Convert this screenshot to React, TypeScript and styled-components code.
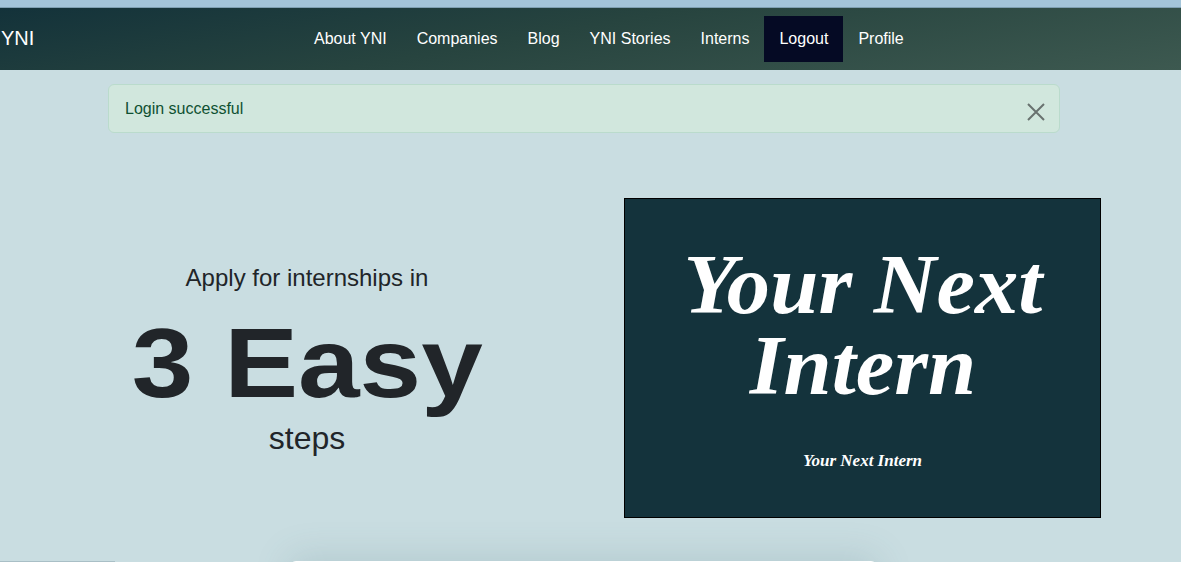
import React from "react";
import styled, { createGlobalStyle } from "styled-components";

const GlobalStyle = createGlobalStyle`
  html, body {
    margin: 0;
    padding: 0;
    background: #c9dde1;
    font-family: "Liberation Sans", Arial, sans-serif;
    color: #212529;
    overflow: hidden;
  }
  * { box-sizing: border-box; }
`;

const TopStrip = styled.div`
  height: 8px;
  background: #a3c4d9;
  border-bottom: 1px solid #7e9fb2;
`;

const NavBar = styled.nav`
  height: 62px;
  display: flex;
  align-items: center;
  background: linear-gradient(170deg, #13323a 0%, #27443f 45%, #3d5950 100%);
`;

const Brand = styled.a`
  font-size: 20px;
  color: #ffffff;
  padding-left: 1px;
  width: 299px;
  line-height: 30px;
  margin-top: -2px;
`;

const NavList = styled.ul`
  display: flex;
  list-style: none;
  margin: 0;
  padding: 0;
`;

const NavLink = styled.li<{ $active?: boolean }>`
  font-size: 16px;
  line-height: 25px;
  padding: 10px 15px 11px;
  color: #ffffff;
  background: ${(p) => (p.$active ? "#050a24" : "transparent")};
`;

const Main = styled.main`
  display: flex;
  flex-direction: column;
`;

const Alert = styled.div`
  margin: 14px 0 0 108px;
  width: 952px;
  height: 49px;
  display: flex;
  align-items: center;
  justify-content: space-between;
  padding: 0 16px;
  background: #d1e7dd;
  border: 1px solid #badbcc;
  border-radius: 6px;
  color: #0f5132;
  font-size: 16px;
`;

const AlertText = styled.span`
  line-height: 24px;
`;

const CloseButton = styled.button`
  border: none;
  background: transparent;
  padding: 0;
  margin-right: -2px;
  width: 18px;
  height: 18px;
  display: flex;
  align-items: center;
  justify-content: center;
  margin-top: 6px;
`;

const Hero = styled.section`
  display: grid;
  grid-template-columns: 614px 477px;
  column-gap: 10px;
  margin-top: 65px;
`;

const Pitch = styled.div`
  display: flex;
  flex-direction: column;
  align-items: center;
  padding-top: 65px;
`;

const PitchLead = styled.div`
  font-size: 24px;
  line-height: 29px;
`;

const PitchBig = styled.div`
  font-weight: 700;
  font-size: 98px;
  line-height: 96px;
  margin-top: 23px;
  color: #212529;
  transform: scaleX(1.13);
`;

const PitchTail = styled.div`
  font-size: 32px;
  line-height: 38px;
  margin-top: 8px;
`;

const Card = styled.div`
  height: 320px;
  background: #14333c;
  border: 1px solid #000000;
  display: flex;
  flex-direction: column;
  align-items: center;
  padding-top: 45px;
  color: #ffffff;
  font-family: "Liberation Serif", "Times New Roman", serif;
  font-style: italic;
  font-weight: 700;
`;

const CardTitle = styled.div`
  font-size: 85px;
  line-height: 81px;
  text-align: center;
  transform: scaleX(1.02);
`;

const CardSub = styled.div`
  font-size: 17px;
  line-height: 24px;
  margin-top: 43px;
`;

const NextRow = styled.div`
  position: relative;
  height: 60px;
  margin-top: 43px;
`;

const NextCard = styled.div`
  position: absolute;
  left: 290px;
  top: 0;
  width: 587px;
  height: 200px;
  background: #ffffff;
  border-radius: 6px;
  box-shadow: 0 -4px 36px rgba(70, 110, 120, 0.18);
`;

const SideTab = styled.div`
  position: absolute;
  left: 0;
  top: 0;
  width: 115px;
  height: 4px;
  background: #4f7f96;
  border-top: 1px solid #a9bfc6;
`;

export default function App() {
  const links = ["About YNI", "Companies", "Blog", "YNI Stories", "Interns", "Logout", "Profile"];
  return (
    <>
      <GlobalStyle />
      <TopStrip />
      <NavBar>
        <Brand>YNI</Brand>
        <NavList>
          {links.map((l) => (
            <NavLink key={l} $active={l === "Logout"}>
              {l}
            </NavLink>
          ))}
        </NavList>
      </NavBar>
      <Main>
        <Alert>
          <AlertText>Login successful</AlertText>
          <CloseButton aria-label="Close">
            <svg width="18" height="18" viewBox="0 0 18 18">
              <path d="M1 1 L17 17 M17 1 L1 17" stroke="#68726f" strokeWidth="2" />
            </svg>
          </CloseButton>
        </Alert>
        <Hero>
          <Pitch>
            <PitchLead>Apply for internships in</PitchLead>
            <PitchBig>3 Easy</PitchBig>
            <PitchTail>steps</PitchTail>
          </Pitch>
          <Card>
            <CardTitle>
              Your Next
              <br />
              Intern
            </CardTitle>
            <CardSub>Your Next Intern</CardSub>
          </Card>
        </Hero>
        <NextRow>
          <SideTab />
          <NextCard />
        </NextRow>
      </Main>
    </>
  );
}
